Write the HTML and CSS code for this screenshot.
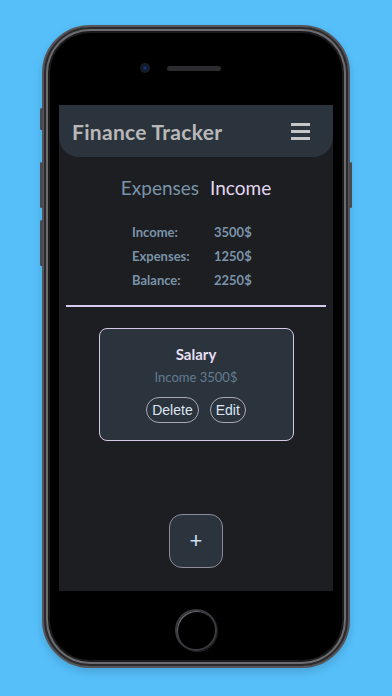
FILE: index.html
```html
<!DOCTYPE html>
<html lang="en">
<head>
  <meta charset="UTF-8">
  <meta name="viewport" content="width=device-width, initial-scale=1.0">
  <title>Finance Tracker</title>
  <link rel="stylesheet" href="styles.css">
</head>
<body>
  <div class="phone">
    <span class="side-btn mute"></span>
    <span class="side-btn vol-up"></span>
    <span class="side-btn vol-down"></span>
    <span class="side-btn power"></span>

    <div class="bezel-top">
      <span class="camera"></span>
      <span class="speaker"></span>
    </div>

    <div class="screen">
      <header class="app-header">
        <h1>Finance Tracker</h1>
        <div class="menu">
          <span></span>
          <span></span>
          <span></span>
        </div>
      </header>

      <nav class="tabs">
        <span class="tab">Expenses</span>
        <span class="tab active">Income</span>
      </nav>

      <div class="summary">
        <span>Income:</span><span>3500$</span>
        <span>Expenses:</span><span>1250$</span>
        <span>Balance:</span><span>2250$</span>
      </div>

      <hr class="divider">

      <div class="entry">
        <h3>Salary</h3>
        <div class="entry-amount">Income 3500$</div>
        <div class="entry-actions">
          <button>Delete</button>
          <button>Edit</button>
        </div>
      </div>

      <button class="add-btn">+</button>
    </div>

    <div class="bezel-bottom">
      <span class="home"></span>
    </div>
  </div>
</body>
</html>
```
FILE: styles.css
```css
body {
  margin: 0;
  height: 696px;
  background-color: #56bffa;
  display: flex;
  justify-content: center;
  font-family: 'Lato', 'Noto Sans', sans-serif;
  overflow: hidden;
}
.phone {
  position: relative;
  margin-top: 25px;
  width: 308px;
  height: 643px;
  box-sizing: border-box;
  background: #000;
  border-radius: 48px;
  border: 2px solid #55555a;
  box-shadow: inset 0 0 0 2px #2a2a2c, inset 0 0 0 4px #6c6c70, inset 0 0 0 6px #1a1a1c, 0 4px 10px rgba(0,0,0,0.15);
  display: flex;
  flex-direction: column;
  align-items: center;
}
.side-btn {
  position: absolute;
  width: 3px;
  background: #4a4a4e;
  border-radius: 2px;
}
.mute { left: -4px; top: 81px; height: 22px; }
.vol-up { left: -4px; top: 135px; height: 46px; }
.vol-down { left: -4px; top: 193px; height: 46px; }
.power { right: -4px; top: 135px; height: 46px; }
.bezel-top {
  height: 78px;
  width: 100%;
  display: flex;
  justify-content: center;
  align-items: center;
  gap: 17px;
  padding-top: 4px;
  box-sizing: border-box;
}
.camera {
  width: 10px;
  height: 10px;
  border-radius: 50%;
  background: radial-gradient(circle, #1d3a7a 0, #0e1a36 35%, #1c1c20 60%);
  margin-left: -32px;
}
.speaker {
  width: 54px;
  height: 5px;
  border-radius: 3px;
  background: #2c2c30;
}
.screen {
  width: 274px;
  height: 486px;
  background: #1d1e21;
  display: flex;
  flex-direction: column;
  align-items: center;
}
.app-header {
  width: 100%;
  height: 52px;
  box-sizing: border-box;
  background: #2b343d;
  border-radius: 0 0 20px 20px;
  display: flex;
  align-items: center;
  justify-content: space-between;
  padding: 0 23px 0 13px;
}
.app-header h1 {
  margin: 0;
  font-size: 21px;
  font-weight: 700;
  color: #b9b9b9;
  letter-spacing: 0.3px;
}
.menu {
  display: flex;
  flex-direction: column;
  gap: 4px;
}
.menu span {
  display: block;
  width: 19px;
  height: 3px;
  background: #c6c6c6;
}
.tabs {
  margin-top: 19px;
  display: flex;
  gap: 11px;
  font-size: 19px;
  line-height: 24px;
}
.tab {
  color: #7893aa;
}
.tab.active {
  color: #e2d8f2;
}
.summary {
  margin: 20px 9px 0 0;
  display: grid;
  grid-template-columns: 82px 37px;
  font-size: 13px;
  font-weight: 700;
  line-height: 24px;
  color: #7a93a9;
}
.divider {
  margin: 13px 0 0;
  width: 260px;
  height: 2px;
  border: none;
  background: #d7c9ec;
}
.entry {
  margin-top: 21px;
  width: 195px;
  box-sizing: border-box;
  background: #2b343d;
  border: 1.5px solid #d4c8e6;
  border-radius: 8px;
  padding: 15px 0 17px;
  text-align: center;
}
.entry h3 {
  margin: 0;
  font-size: 15px;
  line-height: 20px;
  font-weight: 700;
  color: #e6def2;
}
.entry-amount {
  margin-top: 4px;
  font-size: 13px;
  line-height: 18px;
  color: #627b90;
}
.entry-actions {
  margin-top: 11px;
  display: flex;
  justify-content: center;
  gap: 11px;
}
.entry-actions button {
  height: 26px;
  padding: 0 5px;
  background: transparent;
  border: 1px solid #a9a7b6;
  border-radius: 13px;
  color: #dce6f2;
  font-family: 'Liberation Sans', Arial, sans-serif;
  font-size: 14px;
}
.add-btn {
  margin-top: 73px;
  width: 54px;
  height: 54px;
  box-sizing: border-box;
  background: #2b343d;
  border: 1.5px solid #8d8c99;
  border-radius: 13px;
  color: #c8def2;
  font-family: 'Liberation Sans', Arial, sans-serif;
  font-size: 22px;
  padding: 0;
}
.bezel-bottom {
  flex: 1;
  width: 100%;
  display: flex;
  justify-content: center;
  padding-top: 18px;
  box-sizing: border-box;
}
.home {
  width: 42px;
  height: 42px;
  box-sizing: border-box;
  border-radius: 50%;
  border: 2px solid #3a3a40;
  box-shadow: inset 1px 1px 0 #6a6a70, 1px 1px 0 #222;
}
```
